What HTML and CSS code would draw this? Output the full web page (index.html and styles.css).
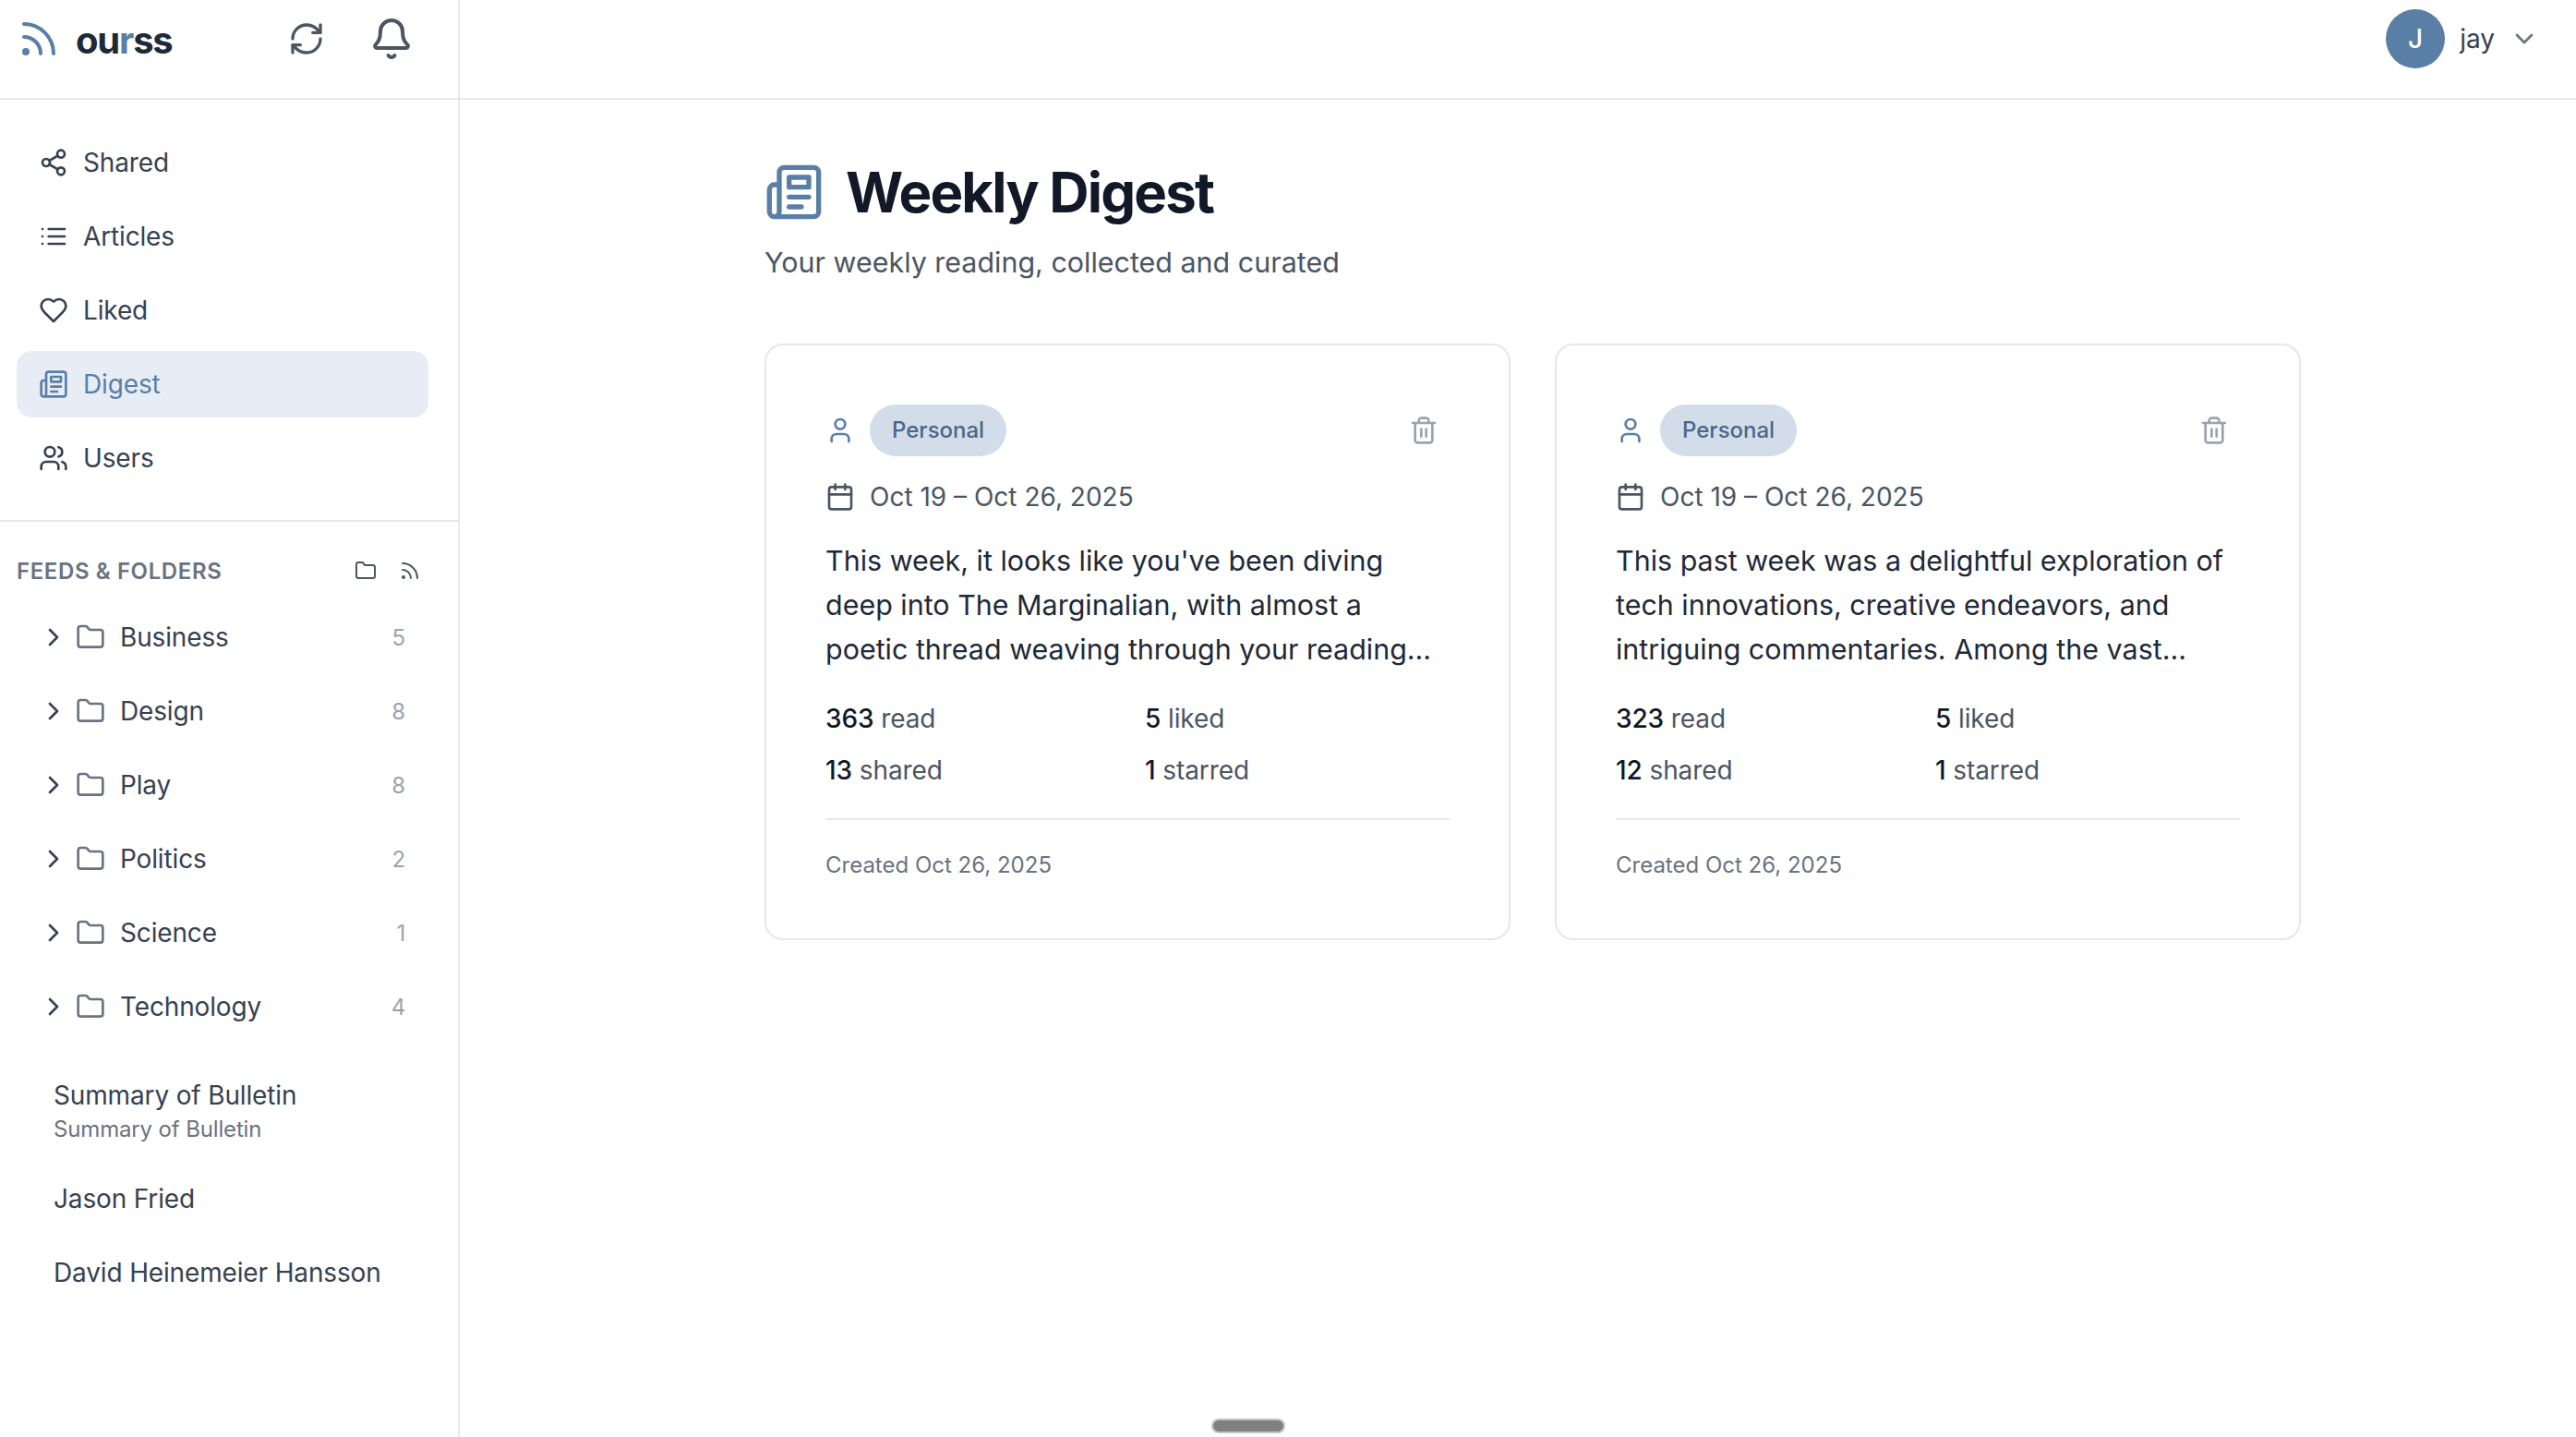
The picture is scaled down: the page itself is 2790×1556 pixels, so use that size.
FILE: index.html
```html
<!DOCTYPE html>
<html>
<head>
    <title>Weekly Digest - ourss</title>
    <link rel="stylesheet" href="styles.css">
</head>
<body>
    <svg class="sprites" width="0" height="0">
        <symbol id="i-rss" viewBox="0 0 24 24"><path d="M4 11a9 9 0 0 1 9 9"/><path d="M4 4a16 16 0 0 1 16 16"/><circle cx="5" cy="19" r="1"/></symbol>
        <symbol id="i-folder" viewBox="0 0 24 24"><path d="M20 20a2 2 0 0 0 2-2V8a2 2 0 0 0-2-2h-7.9a2 2 0 0 1-1.69-.9L9.6 3.9A2 2 0 0 0 7.93 3H4a2 2 0 0 0-2 2v13a2 2 0 0 0 2 2Z"/></symbol>
        <symbol id="i-news" viewBox="0 0 24 24"><path d="M4 22h16a2 2 0 0 0 2-2V4a2 2 0 0 0-2-2H8a2 2 0 0 0-2 2v16a2 2 0 0 1-2 2Zm0 0a2 2 0 0 1-2-2v-9c0-1.1.9-2 2-2h2"/><path d="M18 14h-8"/><path d="M15 18h-5"/><path d="M10 6h8v4h-8V6Z"/></symbol>
        <symbol id="i-chev" viewBox="0 0 24 24"><path d="m9 18 6-6-6-6"/></symbol>
        <symbol id="i-user" viewBox="0 0 24 24"><path d="M19 21v-2a4 4 0 0 0-4-4H9a4 4 0 0 0-4 4v2"/><circle cx="12" cy="7" r="4"/></symbol>
        <symbol id="i-cal" viewBox="0 0 24 24"><path d="M8 2v4"/><path d="M16 2v4"/><rect x="3" y="4" width="18" height="18" rx="2"/><path d="M3 10h18"/></symbol>
        <symbol id="i-trash" viewBox="0 0 24 24"><path d="M3 6h18"/><path d="M19 6v14c0 1-1 2-2 2H7c-1 0-2-1-2-2V6"/><path d="M8 6V4c0-1 1-2 2-2h4c1 0 2 1 2 2v2"/><path d="M10 11v6"/><path d="M14 11v6"/></symbol>
    </svg>

    <aside class="sidebar">
        <div class="brand">
            <svg class="brand-logo"><use href="#i-rss"/></svg>
            <span class="brand-name">ou<span class="brand-r">r</span>ss</span>
            <svg class="top-icon refresh" viewBox="0 0 24 24"><path d="M3 12a9 9 0 0 1 9-9 9.75 9.75 0 0 1 6.74 2.74L21 8"/><path d="M21 3v5h-5"/><path d="M21 12a9 9 0 0 1-9 9 9.75 9.75 0 0 1-6.74-2.74L3 16"/><path d="M8 16H3v5"/></svg>
            <svg class="top-icon bell" viewBox="0 0 24 24"><path d="M10.268 21a2 2 0 0 0 3.464 0"/><path d="M3.262 15.326A1 1 0 0 0 4 17h16a1 1 0 0 0 .74-1.673C19.41 13.956 18 12.499 18 8A6 6 0 0 0 6 8c0 4.499-1.411 5.956-2.738 7.326"/></svg>
        </div>

        <nav class="nav">
            <a class="nav-item">
                <svg class="nav-icon" viewBox="0 0 24 24"><circle cx="18" cy="5" r="3"/><circle cx="6" cy="12" r="3"/><circle cx="18" cy="19" r="3"/><path d="m8.59 13.51 6.83 3.98"/><path d="m15.41 6.51-6.82 3.98"/></svg>
                Shared
            </a>
            <a class="nav-item">
                <svg class="nav-icon" viewBox="0 0 24 24"><path d="M3 12h.01"/><path d="M3 18h.01"/><path d="M3 6h.01"/><path d="M8 12h13"/><path d="M8 18h13"/><path d="M8 6h13"/></svg>
                Articles
            </a>
            <a class="nav-item">
                <svg class="nav-icon" viewBox="0 0 24 24"><path d="M19 14c1.49-1.46 3-3.21 3-5.5A5.5 5.5 0 0 0 16.5 3c-1.76 0-3 .5-4.5 2-1.5-1.5-2.74-2-4.5-2A5.5 5.5 0 0 0 2 8.5c0 2.3 1.5 4.05 3 5.5l7 7Z"/></svg>
                Liked
            </a>
            <a class="nav-item active">
                <svg class="nav-icon"><use href="#i-news"/></svg>
                Digest
            </a>
            <a class="nav-item">
                <svg class="nav-icon" viewBox="0 0 24 24"><path d="M16 21v-2a4 4 0 0 0-4-4H6a4 4 0 0 0-4 4v2"/><circle cx="9" cy="7" r="4"/><path d="M22 21v-2a4 4 0 0 0-3-3.87"/><path d="M16 3.13a4 4 0 0 1 0 7.75"/></svg>
                Users
            </a>
        </nav>

        <section class="feeds">
            <div class="feeds-head">
                <span class="feeds-title">Feeds &amp; Folders</span>
                <svg class="head-icon"><use href="#i-folder"/></svg>
                <svg class="head-icon"><use href="#i-rss"/></svg>
            </div>

            <div class="folder">
                <svg class="chev"><use href="#i-chev"/></svg>
                <svg class="folder-icon"><use href="#i-folder"/></svg>
                <span class="folder-name">Business</span>
                <span class="count">5</span>
            </div>
            <div class="folder">
                <svg class="chev"><use href="#i-chev"/></svg>
                <svg class="folder-icon"><use href="#i-folder"/></svg>
                <span class="folder-name">Design</span>
                <span class="count">8</span>
            </div>
            <div class="folder">
                <svg class="chev"><use href="#i-chev"/></svg>
                <svg class="folder-icon"><use href="#i-folder"/></svg>
                <span class="folder-name">Play</span>
                <span class="count">8</span>
            </div>
            <div class="folder">
                <svg class="chev"><use href="#i-chev"/></svg>
                <svg class="folder-icon"><use href="#i-folder"/></svg>
                <span class="folder-name">Politics</span>
                <span class="count">2</span>
            </div>
            <div class="folder">
                <svg class="chev"><use href="#i-chev"/></svg>
                <svg class="folder-icon"><use href="#i-folder"/></svg>
                <span class="folder-name">Science</span>
                <span class="count">1</span>
            </div>
            <div class="folder">
                <svg class="chev"><use href="#i-chev"/></svg>
                <svg class="folder-icon"><use href="#i-folder"/></svg>
                <span class="folder-name">Technology</span>
                <span class="count">4</span>
            </div>

            <div class="feed feed-first">
                <div class="feed-name">Summary of Bulletin</div>
                <div class="feed-sub">Summary of Bulletin</div>
            </div>
            <div class="feed"><div class="feed-name">Jason Fried</div></div>
            <div class="feed"><div class="feed-name">David Heinemeier Hansson</div></div>
        </section>
    </aside>

    <div class="page">
        <header class="topbar">
            <span class="avatar">J</span>
            <span class="username">jay</span>
            <svg class="user-chev" viewBox="0 0 24 24"><path d="m6 9 6 6 6-6"/></svg>
        </header>

        <main class="content">
            <div class="heading">
                <svg class="heading-icon"><use href="#i-news"/></svg>
                <h1>Weekly Digest</h1>
            </div>
            <p class="subtitle">Your weekly reading, collected and curated</p>

            <div class="cards">
                <article class="card">
                    <div class="card-top">
                        <svg class="person"><use href="#i-user"/></svg>
                        <span class="pill">Personal</span>
                        <svg class="trash"><use href="#i-trash"/></svg>
                    </div>
                    <div class="dates">
                        <svg class="cal"><use href="#i-cal"/></svg>
                        Oct 19 – Oct 26, 2025
                    </div>
                    <p class="summary">This week, it looks like you've been diving deep into The Marginalian, with almost a poetic thread weaving through your reading...</p>
                    <div class="stats">
                        <div><b>363</b> read</div>
                        <div><b>5</b> liked</div>
                        <div><b>13</b> shared</div>
                        <div><b>1</b> starred</div>
                    </div>
                    <div class="created">Created Oct 26, 2025</div>
                </article>

                <article class="card">
                    <div class="card-top">
                        <svg class="person"><use href="#i-user"/></svg>
                        <span class="pill">Personal</span>
                        <svg class="trash"><use href="#i-trash"/></svg>
                    </div>
                    <div class="dates">
                        <svg class="cal"><use href="#i-cal"/></svg>
                        Oct 19 – Oct 26, 2025
                    </div>
                    <p class="summary">This past week was a delightful exploration of tech innovations, creative endeavors, and intriguing commentaries. Among the vast...</p>
                    <div class="stats">
                        <div><b>323</b> read</div>
                        <div><b>5</b> liked</div>
                        <div><b>12</b> shared</div>
                        <div><b>1</b> starred</div>
                    </div>
                    <div class="created">Created Oct 26, 2025</div>
                </article>
            </div>
        </main>
    </div>

    <div class="scroll-handle"></div>
</body>
</html>
```

FILE: styles.css
```css
* {
    box-sizing: border-box;
}

html, body {
    height: 100%;
}

body {
    display: flex;
    margin: 0;
    overflow: hidden;
    background-color: #fff;
    color: #374151;
    font-family: Inter, "Liberation Sans", sans-serif;
    font-size: 28px;
}

svg {
    flex: none;
    fill: none;
    stroke: currentColor;
    stroke-width: 2;
    stroke-linecap: round;
    stroke-linejoin: round;
}

.sprites {
    position: absolute;
}

/* sidebar */
.sidebar {
    flex: none;
    width: 498px;
    height: 100%;
    border-right: 2px solid #e5e7eb;
    letter-spacing: -0.15px;
}

.brand {
    display: flex;
    align-items: center;
    height: 108px;
    padding: 0 48px 22px 18px;
    border-bottom: 2px solid #e5e7eb;
}

.brand-logo {
    width: 48px;
    height: 48px;
    color: #5a7fa6;
}

.brand-name {
    margin-left: 16px;
    margin-top: 2px;
    color: #1f2937;
    font-size: 40px;
    font-weight: 700;
    letter-spacing: -1.2px;
}

.brand-r {
    color: #5a7fa6;
}

.top-icon {
    color: #4b5563;
}

.refresh {
    width: 40px;
    height: 40px;
    margin-left: auto;
}

.bell {
    width: 48px;
    height: 48px;
    margin-left: 48px;
}

.nav {
    display: flex;
    flex-direction: column;
    gap: 8px;
    padding: 32px 32px 31px 18px;
    border-bottom: 2px solid #e5e7eb;
}

.nav-item {
    display: flex;
    align-items: center;
    gap: 16px;
    height: 72px;
    padding-left: 24px;
    border-radius: 16px;
}

.nav-icon {
    width: 32px;
    height: 32px;
}

.nav-item.active {
    background-color: #e8edf5;
    color: #5a7fa6;
}

.feeds-head {
    display: flex;
    align-items: center;
    gap: 24px;
    height: 40px;
    margin: 33px 0 16px;
    padding: 0 40px 0 18px;
}

.feeds-title {
    flex: 1;
    color: #6b7280;
    font-size: 24px;
    font-weight: 600;
    letter-spacing: 0.6px;
    text-transform: uppercase;
}

.head-icon {
    width: 24px;
    height: 24px;
    color: #4b5563;
}

.folder {
    display: flex;
    align-items: center;
    height: 72px;
    margin-bottom: 8px;
    padding: 0 57px 0 42px;
}

.chev {
    width: 32px;
    height: 32px;
}

.folder-icon {
    width: 32px;
    height: 32px;
    margin-left: 8px;
    color: #6b7280;
}

.folder-name {
    flex: 1;
    margin-left: 16px;
}

.count {
    color: #9ca3af;
    font-size: 24px;
}

.feed {
    display: flex;
    flex-direction: column;
    justify-content: center;
    min-height: 72px;
    margin-bottom: 8px;
    padding-left: 58px;
}

.feed-first {
    margin-top: 29px;
    min-height: 99px;
}

.feed-name {
    line-height: 36px;
}

.feed-sub {
    margin-top: 1px;
    color: #6b7280;
    font-size: 24px;
    line-height: 36px;
}

/* main area */
.page {
    flex: 1;
    min-width: 0;
}

.topbar {
    display: flex;
    align-items: center;
    justify-content: flex-end;
    height: 108px;
    padding: 0 40px 22px 0;
    border-bottom: 2px solid #e5e7eb;
}

.avatar {
    display: flex;
    align-items: center;
    justify-content: center;
    width: 64px;
    height: 64px;
    border-radius: 50%;
    background-color: #5a7fa6;
    color: #fff;
    font-weight: 500;
}

.username {
    margin-left: 16px;
}

.user-chev {
    width: 32px;
    height: 32px;
    margin-left: 16px;
    color: #6b7280;
}

.content {
    padding: 64px 0 0 330px;
}

.heading {
    display: flex;
    align-items: center;
    gap: 24px;
}

.heading-icon {
    width: 64px;
    height: 64px;
    color: #5a7fa6;
}

h1 {
    margin: 0;
    color: #111827;
    font-size: 60px;
    font-weight: 700;
    line-height: 72px;
    letter-spacing: -1.8px;
}

.subtitle {
    margin: 16px 0 0;
    color: #4b5563;
    font-size: 30.45px;
    line-height: 48px;
}

.cards {
    display: flex;
    gap: 48px;
    margin-top: 64px;
}

.card {
    width: 808px;
    height: 646px;
    padding: 64px 64px 0 64px;
    border: 2px solid #e5e7eb;
    border-radius: 20px;
}

.card-top {
    display: flex;
    align-items: center;
    height: 56px;
}

.person {
    width: 32px;
    height: 32px;
    color: #5a7fa6;
}

.pill {
    margin-left: 16px;
    padding: 0 24px;
    border-radius: 28px;
    background-color: #d3dde9;
    color: #48678a;
    font-size: 24px;
    font-weight: 500;
    line-height: 56px;
}

.trash {
    width: 32px;
    height: 32px;
    margin-left: auto;
    margin-right: 12px;
    color: #9ca3af;
}

.dates {
    display: flex;
    align-items: center;
    gap: 16px;
    margin-top: 26px;
    color: #4b5563;
    line-height: 36px;
}

.cal {
    width: 32px;
    height: 32px;
}

.summary {
    margin: 27px 0 0;
    color: #1f2937;
    font-size: 30.45px;
    line-height: 48px;
}

.stats {
    display: grid;
    grid-template-columns: 1fr 1fr;
    gap: 22px 16px;
    margin-top: 34px;
    padding-bottom: 35px;
    border-bottom: 2px solid #e5e7eb;
    color: #4b5563;
    line-height: 34px;
    letter-spacing: -0.1px;
}

.stats b {
    color: #111827;
    font-weight: 500;
}

.created {
    margin-top: 32px;
    color: #6b7280;
    font-size: 24px;
    line-height: 34px;
}

/* grey bar resting over the bottom of the window */
.scroll-handle {
    position: absolute;
    left: 1312px;
    bottom: 4px;
    width: 80px;
    height: 16px;
    border: 2px solid #c4c4c4;
    border-radius: 8px;
    background-color: #808080;
}
```
